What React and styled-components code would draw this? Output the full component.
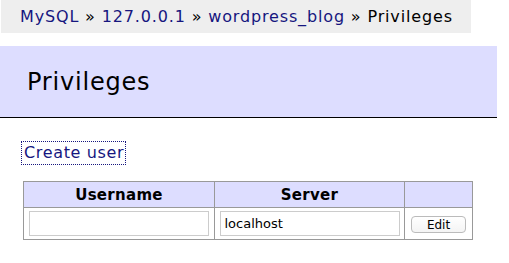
import React from "react"
import styled, { createGlobalStyle } from "styled-components"

const Global = createGlobalStyle`
    body {
        margin: 0;
        background: #fff;
        font-family: "DejaVu Sans", Verdana, sans-serif;
        color: #000;
    }
`

const Page = styled.div`
    display: flex;
    flex-direction: column;
    align-items: flex-start;
    width: 509px;
`

const Breadcrumb = styled.div`
    margin-left: 1px;
    height: 33px;
    line-height: 33px;
    padding: 0 18px 0 19px;
    background: #eee;
    font-size: 16px;
    letter-spacing: 0.85px;
    white-space: nowrap;

    a {
        color: #16167f;
        text-decoration: none;
    }
`

const Header = styled.div`
    margin-top: 13px;
    width: 497px;
    height: 71px;
    background: #ddf;
    border-bottom: 1px solid #000;
    display: flex;
    align-items: center;

    h1 {
        margin: 0;
        padding-left: 27px;
        font-size: 24px;
        letter-spacing: 0.8px;
        font-weight: normal;
    }
`

const Body = styled.div`
    display: flex;
    flex-direction: column;
    align-items: flex-start;
    padding: 24px 0 0 22px;
`

const Link = styled.a`
    color: #16167f;
    text-decoration: none;
    font-size: 16px;
    letter-spacing: 0.65px;
    line-height: 20px;
    padding: 1px 1px 1px 2px;
    outline: 1px dotted #16167f;
`

const Table = styled.table`
    margin: 17px 0 0 1px;
    border-collapse: collapse;
    width: 450px;

    th, td {
        border: 1px solid #999;
        padding: 0;
    }

    th {
        background: #ddf;
        height: 25px;
        font-size: 15px;
        letter-spacing: 0.3px;
        text-align: center;
    }

    td {
        height: 31px;
        text-align: center;
    }
`

const Input = styled.input`
    box-sizing: border-box;
    width: 180px;
    height: 25px;
    border: 1px solid #ccc;
    padding: 0 4px;
    font-family: "DejaVu Sans", Verdana, sans-serif;
    font-size: 13px;
    display: block;
    margin: 0 auto;
    outline: none;
`

const Button = styled.button`
    box-sizing: border-box;
    width: 55px;
    height: 17px;
    border: 1px solid #bbb;
    border-radius: 4px;
    background: linear-gradient(#fff, #f4f4f4);
    font-family: "DejaVu Sans", Verdana, sans-serif;
    font-size: 12px;
    line-height: 14px;
    padding: 0;
    color: #000;
`

export default function App() {
    return (
        <Page>
            <Global />
            <Breadcrumb>
                <a href="#">MySQL</a> » <a href="#">127.0.0.1</a> »{" "}
                <a href="#">wordpress_blog</a> » Privileges
            </Breadcrumb>

            <Header>
                <h1>Privileges</h1>
            </Header>

            <Body>
                <Link href="#">Create user</Link>
                <Table>
                    <thead>
                        <tr>
                            <th style={{ width: 190 }}>Username</th>
                            <th style={{ width: 189 }}>Server</th>
                            <th />
                        </tr>
                    </thead>
                    <tbody>
                        <tr>
                            <td>
                                <Input defaultValue="" />
                            </td>
                            <td>
                                <Input defaultValue="localhost" />
                            </td>
                            <td>
                                <Button>Edit</Button>
                            </td>
                        </tr>
                    </tbody>
                </Table>
            </Body>
        </Page>
    )
}
